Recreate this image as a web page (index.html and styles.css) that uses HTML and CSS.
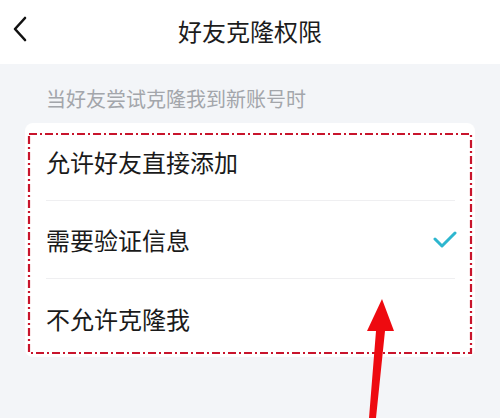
FILE: index.html
```html
<!DOCTYPE html>
<html lang="zh-CN">
<head>
  <meta charset="UTF-8" />
  <meta name="viewport" content="width=device-width, initial-scale=1.0" />
  <title>好友克隆权限</title>
  <link rel="stylesheet" href="styles.css">
</head>
<body>
  <div class="page">
    <div class="header">
      <svg class="back" width="16" height="26" viewBox="0 0 16 26">
        <polyline points="13,2 3,13 13,24" fill="none" stroke="#111" stroke-width="2.6" stroke-linecap="round" stroke-linejoin="round"/>
      </svg>
      <div class="title">好友克隆权限</div>
    </div>

    <div class="main">
      <div class="caption">当好友尝试克隆我到新账号时</div>
      <div class="card">
        <div class="row"><span>允许好友直接添加</span></div>
        <div class="row">
          <span>需要验证信息</span>
          <svg class="check" width="24" height="18" viewBox="0 0 24 18">
            <polyline points="2,8 9,15 22,2" fill="none" stroke="#2db6cf" stroke-width="3" stroke-linecap="round" stroke-linejoin="round"/>
          </svg>
        </div>
        <div class="row last"><span>不允许克隆我</span></div>
      </div>
    </div>

    <!-- annotation drawn over the screenshot -->
    <svg class="mark" width="500" height="418" viewBox="0 0 500 418">
      <rect x="29" y="134" width="442" height="219" fill="none" stroke="#c8142c" stroke-width="2.2" stroke-dasharray="8 3 2 3"/>
      <polygon points="382,299 394,331 385,331 376,418 369,418 376,331 367,331" fill="#ee0a10"/>
    </svg>
  </div>
</body>
</html>
```

FILE: styles.css
```css
body {
  margin: 0;
  font-family: "Noto Sans CJK SC", "Noto Sans", sans-serif;
  background: #f3f5f8;
}
.page {
  position: relative;
  width: 500px;
  height: 418px;
  overflow: hidden;
}
.header {
  position: relative;
  height: 64px;
  background: #fff;
  display: flex;
  align-items: center;
  justify-content: center;
}
.back {
  position: absolute;
  left: 12px;
  top: 16px;
}
.title {
  font-size: 24px;
  color: #1c1c1c;
  margin-top: -3px;
}
.main {
  padding-top: 21px;
}
.caption {
  padding-left: 46px;
  font-size: 20px;
  color: #a3a6ab;
  line-height: 28px;
  height: 38px;
}
.card {
  margin: 0 25px;
  background: #fff;
  border-radius: 8px;
}
.row {
  height: 78px;
  margin: 0 20px 0 21px;
  display: flex;
  align-items: center;
  justify-content: space-between;
  border-bottom: 1px solid #efeff1;
  font-size: 24px;
  color: #1a1a1a;
  box-sizing: border-box;
}
.row.last {
  border-bottom: none;
}
.check {
  margin-right: -2px;
}
.mark {
  position: absolute;
  left: 0;
  top: 0;
}
```
